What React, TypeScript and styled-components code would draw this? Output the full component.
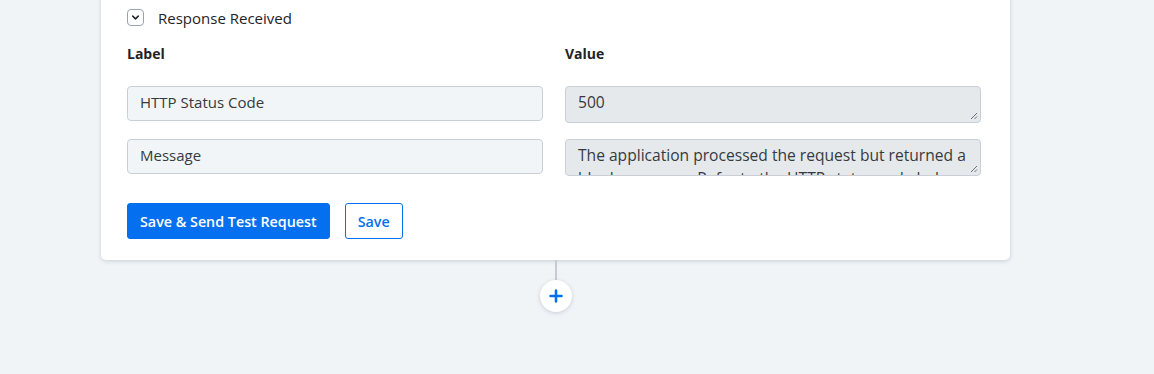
import React from "react";
import styled, { createGlobalStyle } from "styled-components";

const Global = createGlobalStyle`
  html, body { margin: 0; padding: 0; background: #f0f4f7; }
  body { font-family: "Open Sans", Lato, sans-serif; color: #1f2327; overflow: hidden; }
  * { box-sizing: border-box; }
`;

const Page = styled.div`
  width: 1154px;
  height: 374px;
  display: flex;
  flex-direction: column;
  align-items: flex-start;
  padding-left: 101px;
`;

const Card = styled.div`
  width: 909px;
  margin-top: -20px;
  background: #fff;
  border-radius: 5px;
  box-shadow: 0 1px 4px rgba(40, 60, 80, 0.2);
  padding: 27px 30px 21px 26px;
  display: flex;
  flex-direction: column;
`;

const SectionHeader = styled.div`
  display: flex;
  align-items: center;
  gap: 14px;
  height: 21px;
  font-size: 15px;
  color: #1f2327;
`;

const Toggle = styled.span`
  width: 17px;
  height: 17px;
  border: 1px solid #9aa3ad;
  border-radius: 4px;
  display: inline-flex;
  align-items: center;
  justify-content: center;
`;

const Grid = styled.div`
  display: grid;
  grid-template-columns: 416px 416px;
  column-gap: 22px;
  margin-top: 16px;
  row-gap: 0;
`;

const ColHead = styled.div`
  font-size: 14px;
  font-weight: 700;
  height: 20px;
  line-height: 20px;
  margin-bottom: 22px;
`;

const LabelBox = styled.div`
  height: 35px;
  background: #f1f5f8;
  border: 1px solid #c8cfd6;
  border-radius: 4px;
  padding: 4px 12px;
  font-size: 15px;
  line-height: 22px;
  color: #353a40;
  margin-bottom: 18px;
`;

const ValueBox = styled.div`
  position: relative;
  height: 37px;
  background: #e6e9ec;
  border: 1px solid #c8cfd6;
  border-radius: 4px;
  padding: 4px 6px 0 12px;
  font-size: 15.6px;
  line-height: 23px;
  color: #353a40;
  overflow: hidden;
  margin-bottom: 16px;
`;

const Grip = styled.svg`
  position: absolute;
  right: 2px;
  bottom: 2px;
`;

const Actions = styled.div`
  display: flex;
  gap: 15px;
  margin-top: 11px;
`;

const Button = styled.button<{ $primary?: boolean }>`
  height: 36px;
  padding: 0 12px;
  border-radius: 3px;
  font-family: "Open Sans", Lato, sans-serif;
  font-size: 14.3px;
  font-weight: 600;
  cursor: pointer;
  border: 1px solid #0470ef;
  background: ${(p) => (p.$primary ? "#0470ef" : "#fff")};
  color: ${(p) => (p.$primary ? "#fff" : "#0470ef")};
`;

const Connector = styled.div`
  display: flex;
  flex-direction: column;
  align-items: center;
  width: 909px;
`;

const Line = styled.div`
  width: 2px;
  height: 20px;
  background: #c7ccd1;
`;

const PlusButton = styled.div`
  width: 32px;
  height: 32px;
  border-radius: 50%;
  background: #fff;
  box-shadow: 0 1px 4px rgba(40, 60, 80, 0.2);
  display: flex;
  align-items: center;
  justify-content: center;
`;

const GripIcon = () => (
  <Grip width="8" height="8" viewBox="0 0 8 8">
    <path d="M7 1 L1 7 M7 4.5 L4.5 7" stroke="#6b7178" strokeWidth="1" />
  </Grip>
);

export default function App() {
  return (
    <>
      <Global />
      <Page>
        <Card>
          <SectionHeader>
            <Toggle>
              <svg width="11" height="11" viewBox="0 0 12 12">
                <path d="M3 4.5 L6 7.5 L9 4.5" fill="none" stroke="#1f2327" strokeWidth="1.6" strokeLinecap="round" strokeLinejoin="round" />
              </svg>
            </Toggle>
            Response Received
          </SectionHeader>
          <Grid>
            <ColHead>Label</ColHead>
            <ColHead>Value</ColHead>
            <LabelBox>HTTP Status Code</LabelBox>
            <ValueBox>
              500
              <GripIcon />
            </ValueBox>
            <LabelBox>Message</LabelBox>
            <ValueBox>
              The application processed the request but returned a blank response. Refer to the HTTP status code below.
              <GripIcon />
            </ValueBox>
          </Grid>
          <Actions>
            <Button $primary>Save &amp; Send Test Request</Button>
            <Button>Save</Button>
          </Actions>
        </Card>
        <Connector>
          <Line />
          <PlusButton>
            <svg width="14" height="14" viewBox="0 0 14 14">
              <path d="M7 1.5 V12.5 M1.5 7 H12.5" stroke="#0470ef" strokeWidth="2.6" strokeLinecap="round" />
            </svg>
          </PlusButton>
        </Connector>
      </Page>
    </>
  );
}
